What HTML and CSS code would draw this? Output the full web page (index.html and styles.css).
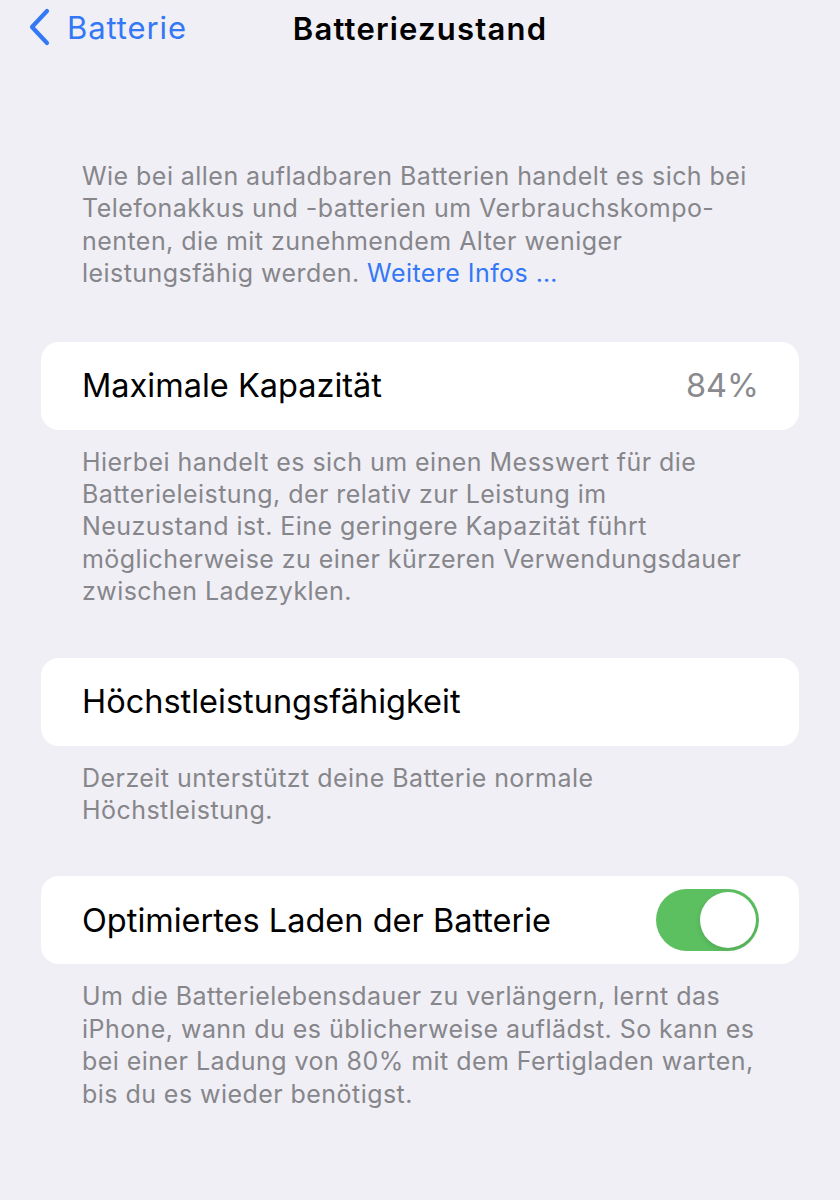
FILE: index.html
```html
<!DOCTYPE html>
<html lang="de">
<head>
<meta charset="utf-8">
<link rel="stylesheet" href="styles.css">
</head>
<body>
<div class="screen">
  <header class="nav">
    <a class="back">
      <svg class="chev" width="24" height="38" viewBox="0 0 24 38"><path d="M20 3 L5 19 L20 35" fill="none" stroke="#3478f6" stroke-width="4.2" stroke-linecap="round" stroke-linejoin="round"/></svg>
      <span>Batterie</span>
    </a>
    <h1 class="title">Batteriezustand</h1>
  </header>

  <p class="note first">Wie bei allen aufladbaren Batterien handelt es sich bei<br>Telefonakkus und -batterien um Verbrauchskompo-<br>nenten, die mit zunehmendem Alter weniger<br>leistungsfähig werden. <span class="link">Weitere Infos …</span></p>

  <div class="card">
    <span class="label">Maximale Kapazität</span>
    <span class="value">84%</span>
  </div>
  <p class="note">Hierbei handelt es sich um einen Messwert für die<br>Batterieleistung, der relativ zur Leistung im<br>Neuzustand ist. Eine geringere Kapazität führt<br>möglicherweise zu einer kürzeren Verwendungsdauer<br>zwischen Ladezyklen.</p>

  <div class="card">
    <span class="label">Höchstleistungsfähigkeit</span>
  </div>
  <p class="note">Derzeit unterstützt deine Batterie normale<br>Höchstleistung.</p>

  <div class="card">
    <span class="label">Optimiertes Laden der Batterie</span>
    <span class="toggle"><span class="knob"></span></span>
  </div>
  <p class="note">Um die Batterielebensdauer zu verlängern, lernt das<br>iPhone, wann du es üblicherweise auflädst. So kann es<br>bei einer Ladung von 80% mit dem Fertigladen warten,<br>bis du es wieder benötigst.</p>
</div>
</body>
</html>
```

FILE: styles.css
```css
* { box-sizing: border-box; }
html, body { margin: 0; padding: 0; }
body {
  background: #f0eff5;
  font-family: Inter, "Noto Sans", "Liberation Sans", sans-serif;
  width: 840px;
  height: 1200px;
  overflow: hidden;
}
.screen {
  padding: 0 41px 0 41px;
  display: flex;
  flex-direction: column;
}
.nav {
  position: relative;
  height: 56px;
  display: flex;
  align-items: center;
  justify-content: center;
}
.back {
  position: absolute;
  left: -14px;
  top: 8px;
  display: flex;
  align-items: center;
  gap: 16px;
  color: #3478f6;
  font-size: 31px;
  letter-spacing: 0.9px;
}
.chev { display: block; }
.title {
  margin: 0;
  font-size: 31px;
  font-weight: 600;
  color: #000;
  letter-spacing: 1.2px;
}
.note {
  margin: 16px 0 0 0;
  padding: 0 41px;
  font-size: 25px;
  line-height: 32.4px;
  color: #86868b;
  letter-spacing: 0.45px;
}
.note.first { margin-top: 104px; }
.link { color: #3478f6; }
.card {
  height: 88px;
  background: #fff;
  border-radius: 18px;
  padding: 0 40px 0 41px;
  display: flex;
  align-items: center;
  justify-content: space-between;
}
.note.first + .card { margin-top: 52px; }
.note + .card { margin-top: 50px; }
.label {
  font-size: 32.5px;
  color: #000;
  letter-spacing: 0;
}
.value {
  font-size: 32.5px;
  color: #8a8a8e;
  letter-spacing: 0;
}
.toggle {
  width: 103px;
  height: 62px;
  border-radius: 31px;
  background: #5cbf60;
  display: flex;
  align-items: center;
  justify-content: flex-end;
  padding: 0 3px;
}
.knob {
  width: 56px;
  height: 56px;
  border-radius: 50%;
  background: #fff;
  box-shadow: 0 2px 5px rgba(0,0,0,0.12);
}
```
